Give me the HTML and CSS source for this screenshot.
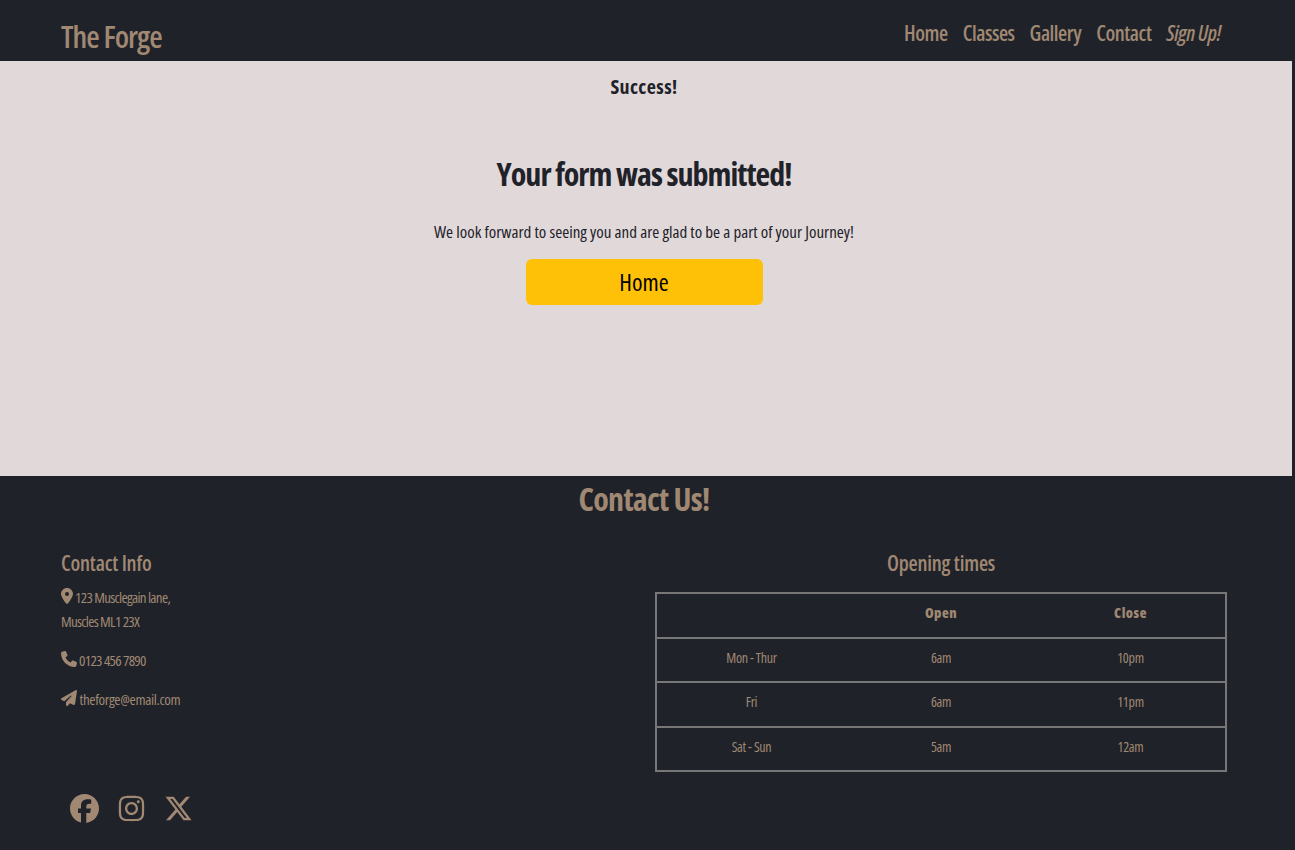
FILE: index.html

```html
<!DOCTYPE html>
<html lang="en">
<head>
    <meta charset="UTF-8">
    <meta name="viewport" content="width=device-width, initial-scale=1.0">
    <title>The Forge</title>
    <link rel="stylesheet" href="styles.css">
</head>
<body>
    <div class="page">
        <header class="navbar">
            <a class="brand" href="#">The Forge</a>
            <nav class="nav-links">
                <a href="#">Home</a>
                <a href="#">Classes</a>
                <a href="#">Gallery</a>
                <a href="#">Contact</a>
                <a class="signup" href="#">Sign Up!</a>
            </nav>
        </header>
        <main class="success">
            <h2 class="success-label">Success!</h2>
            <h1 class="success-title">Your form was submitted!</h1>
            <p class="success-text">We look forward to seeing you and are glad to be a part of your Journey!</p>
            <a class="btn-home" href="#">Home</a>
        </main>
        <footer class="footer">
            <h2 class="footer-title">Contact Us!</h2>
            <div class="footer-grid">
                <div class="contact-col">
                    <h3 class="footer-heading">Contact Info</h3>
                    <p class="contact-line address">
                        <svg class="icon icon-pin" viewBox="0 0 384 512"><path d="M215.7 499.2C267 435 384 279.4 384 192C384 86 298 0 192 0S0 86 0 192c0 87.4 117 243 168.3 307.2c12.3 15.3 35.1 15.3 47.4 0zM192 128a64 64 0 1 1 0 128 64 64 0 1 1 0-128z"/></svg>
                        123 Musclegain lane,<br>Muscles ML1 23X
                    </p>
                    <p class="contact-line">
                        <svg class="icon" viewBox="0 0 512 512"><path d="M164.9 24.6c-7.7-18.6-28-28.5-47.4-23.2l-88 24C12.1 30.2 0 46 0 64C0 311.4 200.6 512 448 512c18 0 33.8-12.1 38.6-29.5l24-88c5.3-19.4-4.6-39.7-23.2-47.4l-96-40c-16.3-6.8-35.2-2.1-46.3 11.6L304.7 368C234.3 334.7 177.3 277.7 144 207.3L193.3 167c13.7-11.2 18.4-30 11.6-46.3l-40-96z"/></svg>
                        0123 456 7890
                    </p>
                    <p class="contact-line email">
                        <svg class="icon" viewBox="0 0 512 512"><path d="M498.1 5.6c10.1 7 15.4 19.1 13.5 31.2l-64 416c-1.5 9.7-7.4 18.2-16 23s-18.9 5.4-28 1.6L284 427.7l-68.5 74.1c-8.9 9.7-22.9 12.9-35.2 8.1S160 493.2 160 480V396.4c0-4 1.5-7.8 4.2-10.7L331.8 202.8c5.8-6.3 5.6-16-.4-22s-15.7-6.4-22-.7L106 360.8 17.7 316.6C7.1 311.3 .3 300.7 0 288.9s5.9-22.8 16.1-28.7l448-256c10.7-6.1 23.9-5.5 34 1.4z"/></svg>
                        theforge@email.com
                    </p>
                </div>
                <div class="times-col">
                    <h3 class="footer-heading centered">Opening times</h3>
                    <table class="times">
                        <tr><th></th><th>Open</th><th>Close</th></tr>
                        <tr><td>Mon - Thur</td><td>6am</td><td>10pm</td></tr>
                        <tr><td>Fri</td><td>6am</td><td>11pm</td></tr>
                        <tr><td>Sat - Sun</td><td>5am</td><td>12am</td></tr>
                    </table>
                </div>
            </div>
            <div class="socials">
                <a href="#"><svg class="social-icon" viewBox="0 0 512 512"><path d="M512 256C512 114.6 397.4 0 256 0S0 114.6 0 256C0 376 82.7 476.8 194.2 504.5V334.2H141.4V256h52.8V222.3c0-87.1 39.4-127.5 125-127.5c16.2 0 44.2 3.2 55.7 6.4V172c-6-.6-16.5-1-29.6-1c-42 0-58.2 15.9-58.2 57.2V256h83.6l-14.4 78.2H287V510.1C413.8 494.8 512 386.9 512 256h0z"/></svg></a>
                <a href="#"><svg class="social-icon" viewBox="0 0 448 512"><path d="M224.1 141c-63.6 0-114.9 51.3-114.9 114.9s51.3 114.9 114.9 114.9S339 319.5 339 255.9 287.7 141 224.1 141zm0 189.6c-41.1 0-74.7-33.5-74.7-74.7s33.5-74.7 74.7-74.7 74.7 33.5 74.7 74.7-33.6 74.7-74.7 74.7zm146.4-194.3c0 14.9-12 26.8-26.8 26.8-14.9 0-26.8-12-26.8-26.8s12-26.8 26.8-26.8 26.8 12 26.8 26.8zm76.1 27.2c-1.7-35.9-9.9-67.7-36.2-93.9-26.2-26.2-58-34.4-93.9-36.2-37-2.1-147.9-2.1-184.9 0-35.8 1.7-67.6 9.9-93.9 36.1s-34.4 58-36.2 93.9c-2.1 37-2.1 147.9 0 184.9 1.7 35.9 9.9 67.7 36.2 93.9s58 34.4 93.9 36.2c37 2.1 147.9 2.1 184.9 0 35.9-1.7 67.7-9.9 93.9-36.2 26.2-26.2 34.4-58 36.2-93.9 2.1-37 2.1-147.8 0-184.8zM398.8 388c-7.8 19.6-22.9 34.7-42.6 42.6-29.5 11.7-99.5 9-132.1 9s-102.7 2.6-132.1-9c-19.6-7.8-34.7-22.9-42.6-42.6-11.7-29.5-9-99.5-9-132.1s-2.6-102.7 9-132.1c7.8-19.6 22.9-34.7 42.6-42.6 29.5-11.7 99.5-9 132.1-9s102.7-2.6 132.1 9c19.6 7.8 34.7 22.9 42.6 42.6 11.7 29.5 9 99.5 9 132.1s2.7 102.7-9 132.1z"/></svg></a>
                <a href="#"><svg class="social-icon" viewBox="0 0 512 512"><path d="M389.2 48h70.6L305.6 224.2 487 464H345L233.7 318.6 106.5 464H35.8L200.7 275.5 26.8 48H172.4L272.9 180.9 389.2 48zM364.4 421.8h39.1L151.1 88h-42L364.4 421.8z"/></svg></a>
            </div>
        </footer>
    </div>
</body>
</html>
```

FILE: styles.css

```css
* {
    box-sizing: border-box;
}

html, body {
    height: 850px;
    overflow: hidden;
}

body {
    margin: 0;
    background: #1f2229;
    font-family: "Open Sans", "Liberation Sans", sans-serif;
    font-stretch: 75%;
    color: #a08873;
}

a {
    color: inherit;
    text-decoration: none;
}

.page {
    width: 1292px;
}

.navbar {
    height: 61px;
    background: #1f2229;
    display: flex;
    justify-content: space-between;
    padding: 0 71px 0 61px;
}

.brand {
    margin-top: 18px;
    font-size: 31px;
    line-height: 36px;
    font-weight: 600;
    letter-spacing: -1px;
}

.nav-links {
    display: flex;
    gap: 15px;
    margin-top: 18px;
    font-size: 21px;
    line-height: 30px;
    font-weight: 600;
    letter-spacing: -0.45px;
}

.signup {
    font-style: italic;
}

/* Success message */
.success {
    height: 415px;
    background: #e0d8d9;
    color: #1f2229;
    text-align: center;
    display: flex;
    flex-direction: column;
    align-items: center;
    padding-right: 4px;
}

.success-label {
    margin: 14px 0 0;
    font-size: 20px;
    line-height: 24px;
    letter-spacing: 0.4px;
}

.success-title {
    margin: 55px 0 0;
    font-size: 32px;
    line-height: 40px;
    letter-spacing: -1px;
}

.success-text {
    margin: 27px 0 0;
    font-size: 17px;
    line-height: 22px;
}

.btn-home {
    margin-top: 16px;
    width: 237px;
    height: 46px;
    line-height: 46px;
    background: #ffc107;
    color: #000;
    border-radius: 6px;
    font-size: 24px;
}

/* Footer */
.footer {
    padding: 0 65px 0 61px;
}

.footer-title {
    margin: 3px 0 0;
    text-align: center;
    font-size: 32px;
    line-height: 40px;
    letter-spacing: -0.7px;
}

.footer-grid {
    display: grid;
    grid-template-columns: 594px 572px;
    margin-top: 31px;
}

.footer-heading {
    margin: 0;
    font-size: 21px;
    line-height: 26px;
    font-weight: 600;
    letter-spacing: -0.2px;
}

.centered {
    text-align: center;
}

.contact-line {
    margin: 0 0 15px;
    font-size: 15px;
    line-height: 24px;
    letter-spacing: -0.7px;
}

.address {
    margin-top: 9px;
}

.email {
    letter-spacing: -0.35px;
}

.icon {
    width: 16px;
    height: 16px;
    fill: currentColor;
    vertical-align: -1px;
}

.icon-pin {
    width: 12px;
}

.times {
    margin-top: 16px;
    width: 572px;
    table-layout: fixed;
    border-collapse: collapse;
    border: 2px solid #777;
}

.times th, .times td {
    border-top: 2px solid #777;
    border-bottom: 2px solid #777;
    height: 44.5px;
    padding: 0 0 5px;
    text-align: center;
    font-size: 14px;
    letter-spacing: -0.3px;
}

.times th {
    font-weight: 800;
    letter-spacing: 0.5px;
}

.socials {
    display: flex;
    align-items: center;
    gap: 18px;
    margin: 22px 0 0 9px;
}

.social-icon {
    display: block;
    width: 29px;
    height: 29px;
    fill: currentColor;
}
```
